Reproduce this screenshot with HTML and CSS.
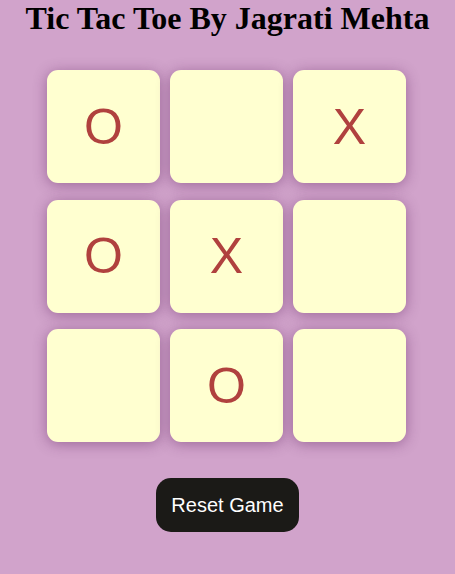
FILE: index.html
```html
<!DOCTYPE html>
<html>
<head>
<meta charset="utf-8">
<link rel="stylesheet" href="styles.css">
</head>
<body>
<div class="main">
  <h1 class="title">Tic Tac Toe By Jagrati Mehta</h1>
  <div class="board">
    <div class="cell">O</div>
    <div class="cell"></div>
    <div class="cell">X</div>
    <div class="cell">O</div>
    <div class="cell">X</div>
    <div class="cell"></div>
    <div class="cell"></div>
    <div class="cell">O</div>
    <div class="cell"></div>
  </div>
  <button class="reset">Reset Game</button>
</div>
</body>
</html>
```
FILE: styles.css
```css
html, body {
  margin: 0;
  padding: 0;
  background: #d1a3cb;
}
.main {
  display: flex;
  flex-direction: column;
  align-items: center;
  height: 574px;
}
.title {
  margin: 0;
  font-family: "Liberation Serif", serif;
  font-weight: bold;
  font-size: 32px;
  line-height: 36px;
  color: #000;
}
.board {
  margin-top: 34px;
  margin-right: 2px;
  display: grid;
  grid-template-columns: repeat(3, 113px);
  grid-auto-rows: 113px;
  column-gap: 10px;
  row-gap: 16.5px;
}
.cell {
  background: #ffffd0;
  border-radius: 11px;
  box-shadow: 0 2px 14px rgba(90, 30, 90, 0.45);
  display: flex;
  align-items: center;
  justify-content: center;
  font-family: "Liberation Sans", Arial, sans-serif;
  font-size: 50px;
  color: #b0413e;
}
.reset {
  margin-top: 36px;
  width: 143px;
  height: 54px;
  border: none;
  border-radius: 15px;
  background: #1b1a17;
  color: #fff;
  font-family: "Liberation Sans", Arial, sans-serif;
  font-size: 20px;
  padding: 0;
}
```
